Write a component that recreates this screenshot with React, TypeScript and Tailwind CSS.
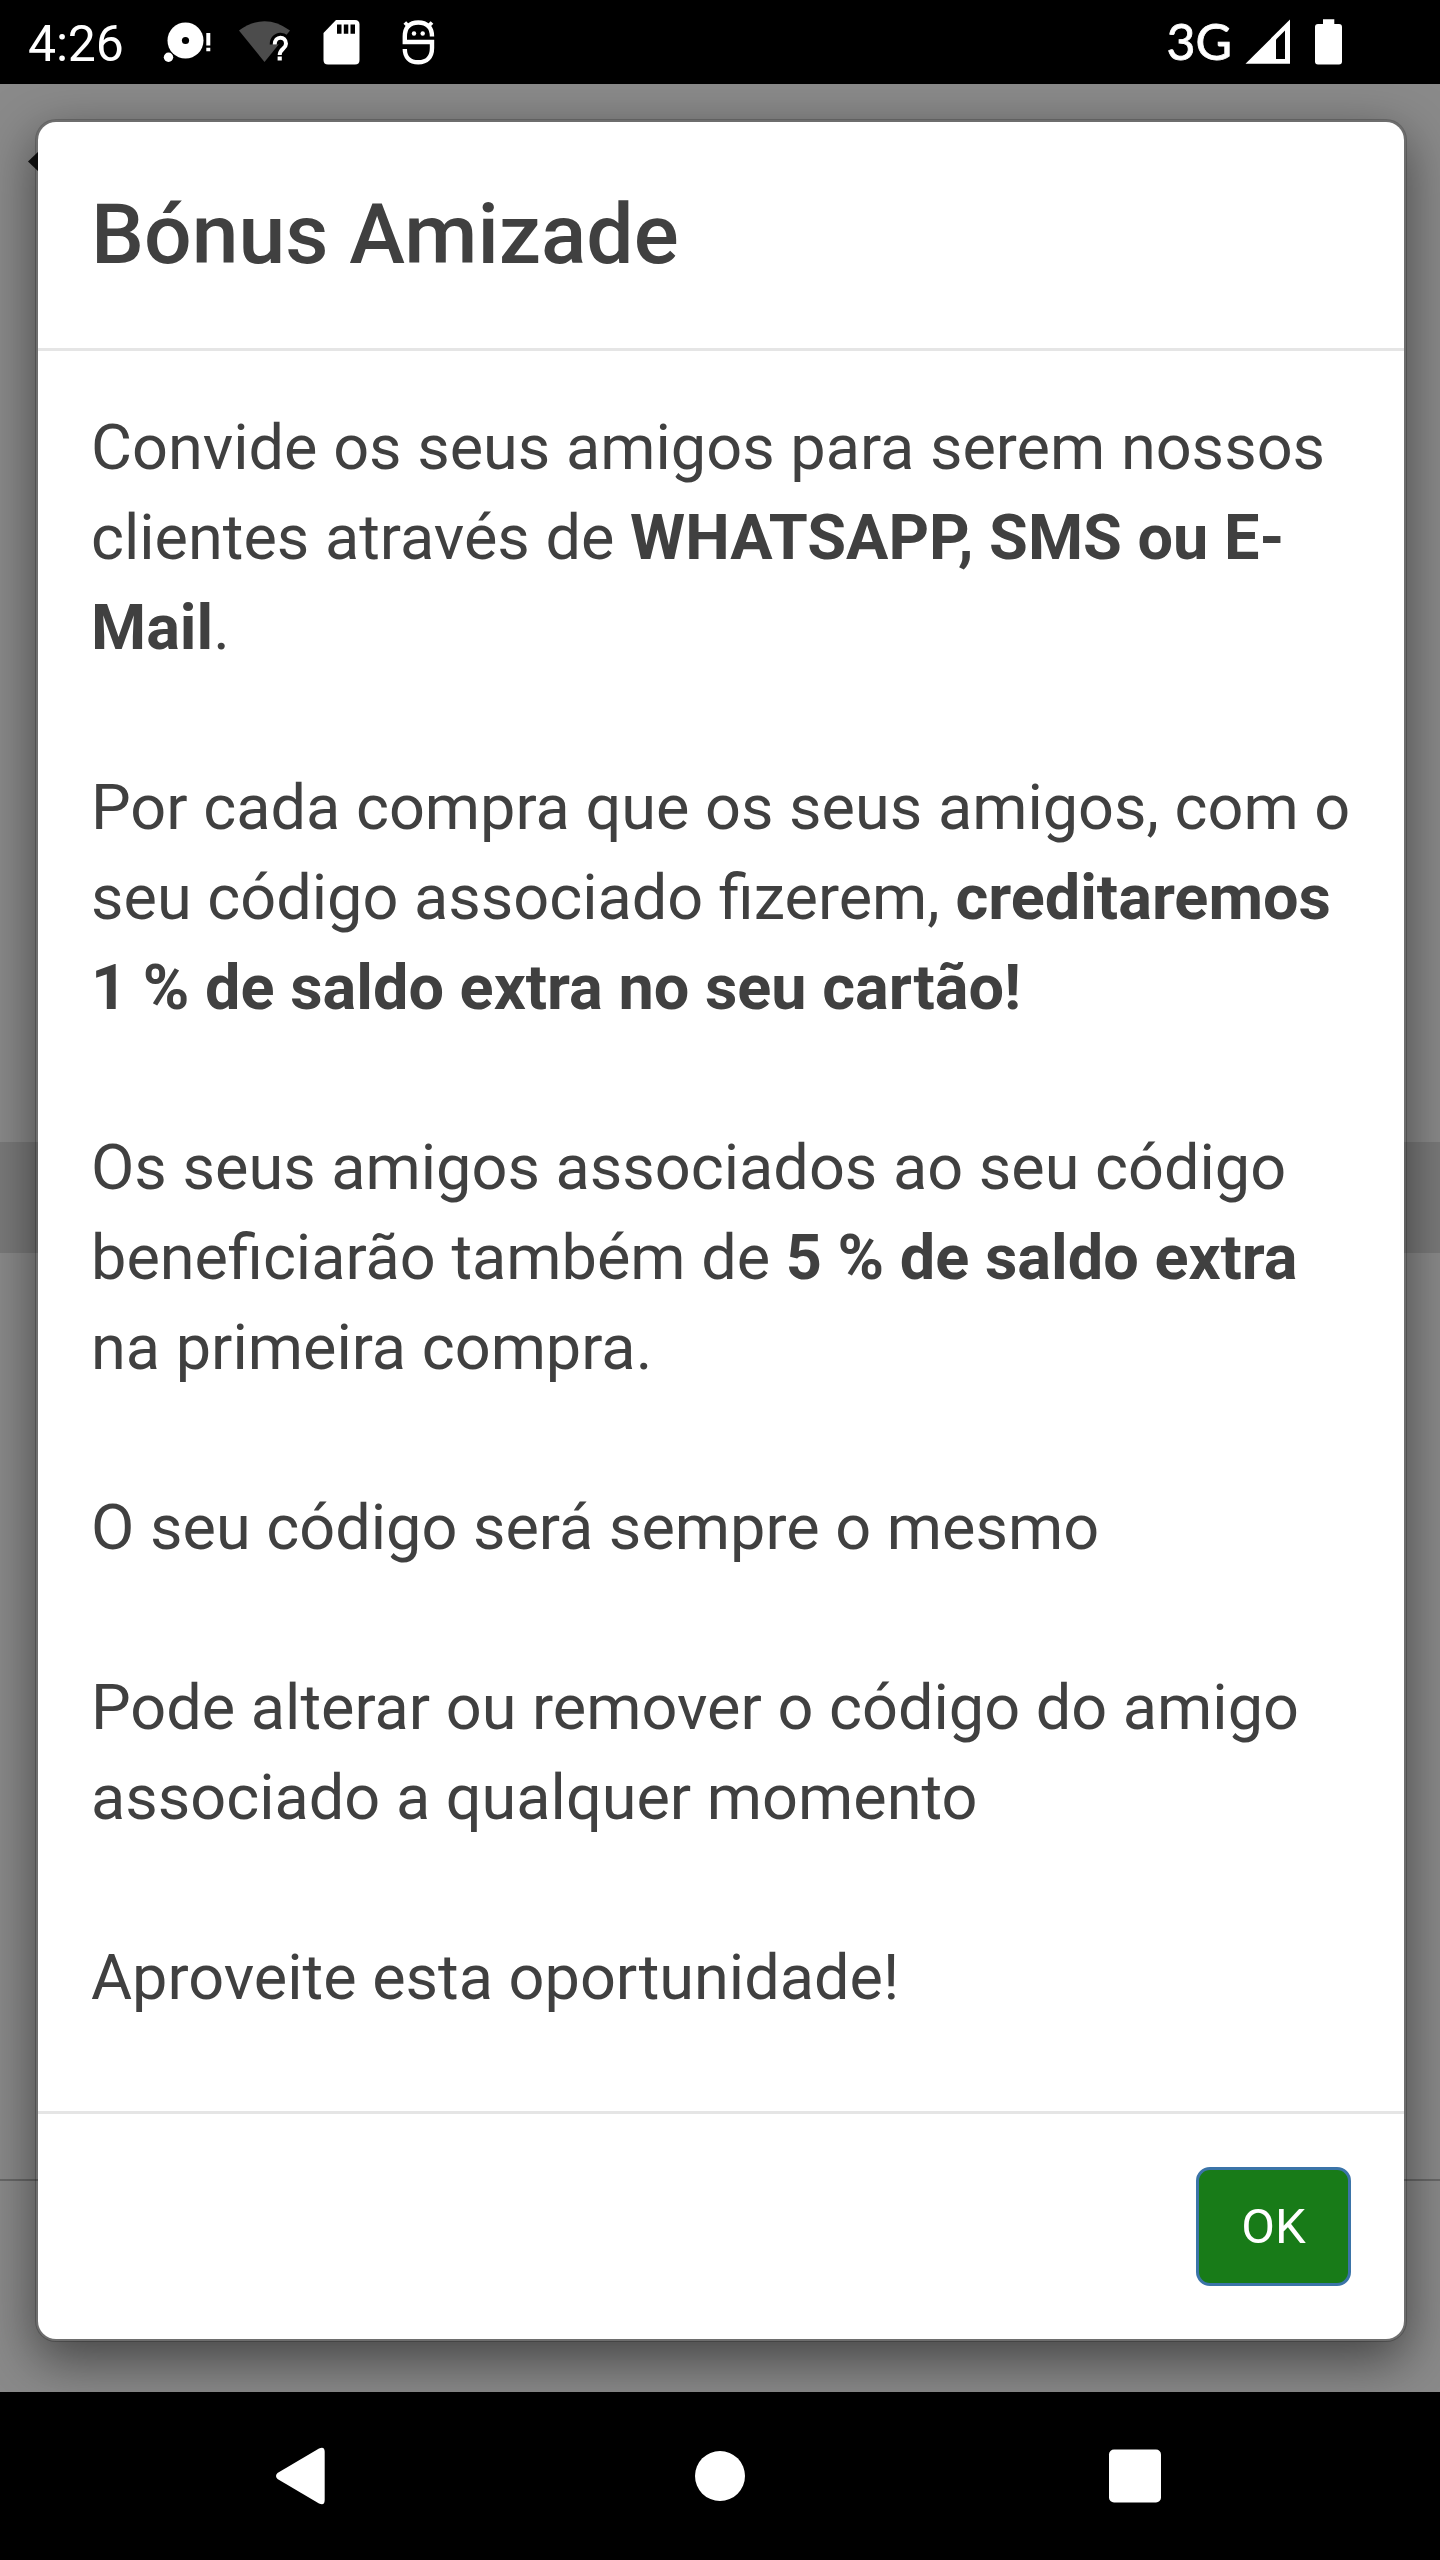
import type { ReactNode } from 'react';

function StatusBar() {
  return (
    <header className="flex h-[84px] shrink-0 items-center bg-black text-white">
      <span className="ml-[28px] mt-[4px] w-[132px] text-[50px] leading-none tracking-[-0.2px]">4:26</span>

      {/* ícones de notificação */}
      <svg className="h-[84px] w-[300px]" viewBox="160 0 300 84" fill="#fff">
        <circle cx="185.500" cy="40.500" r="18" />
        <circle cx="185.500" cy="40.500" r="3.600" fill="#000" />
        <circle cx="168.500" cy="57.300" r="4.700" />
        <path d="M206.300 33h4v12.500h-4zM206.300 47.700h4v3.600h-4z" />

        <path d="M239 30.500Q264.500 12 290 30.500L264.500 62Z" fill="#4c4c4c" />
        <path
          d="M274.700 44.500c0-9 11.300-9 11.300-.7 0 5-6.300 5.200-6.300 11.200"
          fill="none"
          stroke="#000"
          strokeWidth="10"
        />
        <path
          d="M274.700 44.500c0-9 11.300-9 11.300-.7 0 5-6.300 5.200-6.300 11.200"
          fill="none"
          stroke="#fff"
          strokeWidth="4"
        />
        <path d="M277.600 56.500h4.200v4h-4.200z" />

        <path d="M336 20h19q4.500 0 4.500 4.500v35.500q0 4.500-4.500 4.500h-27q-4.500 0-4.500-4.500V33Z" />
        <path d="M337 24.500h4.500v9.300h-4.500zM343.800 24.500h4.500v9.300h-4.500zM350.500 24.500h4.500v9.300h-4.500z" fill="#000" />

        <path d="M404.800 22.500l5 5M432 22.500l-5 5" fill="none" stroke="#fff" strokeWidth="3.800" />
        <path
          d="M432 36.500c0-9-5-14-13.700-14S404.800 27.500 404.800 36.500V42H432V48c0 9-5 14.300-13.700 14.300S404.800 57 404.800 49"
          fill="none"
          stroke="#fff"
          strokeWidth="4.400"
        />
        <circle cx="414" cy="33.500" r="2.200" />
        <circle cx="422.700" cy="33.500" r="2.200" />
      </svg>

      <span className="ml-auto mr-[13px] mt-[-2px] font-[Lato,sans-serif] text-[50px] leading-none [-webkit-text-stroke:0.8px_white]">
        3G
      </span>
      <svg className="h-[84px] w-[195px]" viewBox="1245 0 195 84" fill="#fff">
        <path d="M1245.500 63.700 1290 19.500V63.700Z" />
        <path d="M1276 39.500 1285 30.500V59h-9Z" fill="#000" />
        <path d="M1323 19.300h11.300V24H1339q3 0 3 3v34.600q0 3-3 3h-21q-3 0-3-3V27q0-3 3-3h5Z" />
      </svg>
    </header>
  );
}

function NavigationBar() {
  return (
    <footer className="h-[168px] shrink-0 bg-black">
      <svg className="h-full w-full" viewBox="0 0 1440 168" fill="#fff">
        <path d="M277.500 81 319 56.500q5.700-2.500 5.700 3.500v48q0 6-5.700 3.500L277.500 87q-3-3 0-6Z" />
        <circle cx="720" cy="84" r="25" />
        <rect x="1109" y="57.500" width="52" height="53" rx="5" />
      </svg>
    </footer>
  );
}

function Paragraph({ children }: { children: ReactNode }) {
  return <p className="mb-[90px] last:mb-[35px]">{children}</p>;
}

function BonusModal() {
  return (
    <section
      role="dialog"
      className="absolute left-[35px] top-[35px] flex w-[1372px] flex-col rounded-[21px] border-[3px] border-black/20 bg-white bg-clip-padding shadow-[0_17.5px_52.5px_rgba(0,0,0,0.5)]"
    >
      <div className="border-b-[3px] border-[#e5e5e5] px-[53px] pb-[53px] pt-[53px]">
        <h4 className="text-[84px] font-medium leading-[120px]">Bónus Amizade</h4>
      </div>

      <div className="whitespace-nowrap px-[53px] pb-[53px] pt-[52px] text-[63px] leading-[90px]">
        <Paragraph>
          Convide os seus amigos para serem nossos
          <br />
          clientes através de <b>WHATSAPP, SMS ou E-<br />Mail</b>.
        </Paragraph>
        <Paragraph>
          Por cada compra que os seus amigos, com o
          <br />
          seu código associado fizerem, <b>creditaremos<br />1 % de saldo extra no seu cartão!</b>
        </Paragraph>
        <Paragraph>
          Os seus amigos associados ao seu código
          <br />
          beneficiarão também de <b>5 % de saldo extra</b>
          <br />
          na primeira compra.
        </Paragraph>
        <Paragraph>O seu código será sempre o mesmo</Paragraph>
        <Paragraph>
          Pode alterar ou remover o código do amigo
          <br />
          associado a qualquer momento
        </Paragraph>
        <Paragraph>Aproveite esta oportunidade!</Paragraph>
      </div>

      <div className="flex justify-end border-t-[3px] border-[#e5e5e5] p-[53px]">
        <button className="h-[119px] w-[155px] rounded-[14px] border-[3px] border-[#3b74a8] bg-[#187b18] text-[49px] leading-none text-white">
          OK
        </button>
      </div>
    </section>
  );
}

export default function App() {
  return (
    <div className="flex h-[2560px] w-[1440px] flex-col overflow-hidden font-[Roboto,sans-serif] text-[#404040]">
      <StatusBar />

      <main className="relative flex flex-1 flex-col overflow-hidden bg-[#8a8a8a]">
        {/* página por trás do modal */}
        <svg className="ml-[28px] mt-[66px] h-[24px] w-[24px] shrink-0" viewBox="0 0 24 24">
          <path d="M0 11.500 12 0V23Z" fill="#111" />
        </svg>
        <div className="mt-[968px] h-[111px] shrink-0 bg-[#7a7a7a]" />
        <div className="mt-[926px] h-[2px] shrink-0 bg-[#686868]" />

        <BonusModal />
      </main>

      <NavigationBar />
    </div>
  );
}
